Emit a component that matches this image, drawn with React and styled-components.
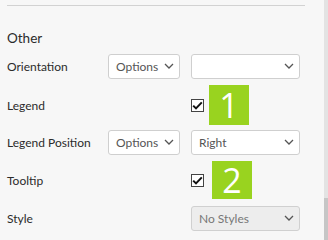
import React from 'react'
import styled, { createGlobalStyle } from 'styled-components'

const Global = createGlobalStyle`
  html, body { margin: 0; padding: 0; }
  body {
    width: 328px;
    height: 240px;
    overflow: hidden;
    background: #f7f7f7;
    font-family: Lato, "Open Sans", sans-serif;
    color: #2b2b2b;
  }
`

const Page = styled.div`
  display: flex;
  width: 328px;
  height: 240px;
`

const Panel = styled.div`
  flex: 1;
  padding: 5px 0 0 7px;
`

const Scroll = styled.div`
  width: 4px;
  background: #e3e3e3;
  display: flex;
  flex-direction: column;
  justify-content: flex-end;
  &::after {
    content: '';
    height: 42px;
    background: #c6c6c6;
  }
`

const Rule = styled.div`
  width: 298px;
  height: 1px;
  background: #d2d2d2;
`

const Heading = styled.div`
  font-size: 13.5px;
  height: 38px;
  line-height: 16px;
  padding-top: 24px;
  box-sizing: border-box;
  margin-bottom: 3px;
`

const Row = styled.div`
  display: grid;
  grid-template-columns: 90px 72px 109px;
  column-gap: 11px;
  align-items: center;
  height: 38px;
`

const Label = styled.div`
  font-size: 12px;
`

const Select = styled.div`
  grid-column: ${({ wide }) => (wide ? '3' : 'auto')};
  height: 25px;
  box-sizing: border-box;
  border: 1px solid ${({ disabled }) => (disabled ? '#d0d0d0' : '#cfcfcf')};
  border-radius: 3px;
  background: ${({ disabled }) => (disabled ? '#ededed' : '#fff')};
  display: flex;
  align-items: center;
  justify-content: space-between;
  padding: 0 5px 0 7px;
  font-size: 12px;
  color: ${({ disabled }) => (disabled ? '#777' : '#555')};
`

const Check = styled.div`
  grid-column: 3;
  display: flex;
  align-items: center;
`

const Box = styled.div`
  width: 13px;
  height: 13px;
  box-sizing: border-box;
  border: 1px solid #444;
  background: #fff;
  display: flex;
  align-items: center;
  justify-content: center;
`

const Badge = styled.div`
  width: 40px;
  height: ${({ h }) => h}px;
  margin-left: ${({ gap }) => gap}px;
  background: #99d31f;
  color: #fff;
  font-family: "Open Sans", sans-serif;
  font-size: 34px;
  line-height: ${({ h }) => h}px;
  text-align: center;
`

const Chevron = () => (
  <svg width="10" height="6" viewBox="0 0 10 6">
    <path d="M1 1l4 4 4-4" fill="none" stroke="#555" strokeWidth="1.3" />
  </svg>
)

const Tick = () => (
  <svg width="11" height="9" viewBox="0 0 11 9">
    <path d="M1.2 4.6l2.8 2.8L9.8 1.4" fill="none" stroke="#111" strokeWidth="2" />
  </svg>
)

const Checkbox = ({ n, gap, h }) => (
  <Check>
    <Box><Tick /></Box>
    <Badge gap={gap} h={h}>{n}</Badge>
  </Check>
)

const App = () => {
  return (
    <Page>
      <Global />
      <Panel>
        <Rule />
        <Heading>Other</Heading>
        <Row>
          <Label>Orientation</Label>
          <Select>Options<Chevron /></Select>
          <Select><span /><Chevron /></Select>
        </Row>
        <Row>
          <Label>Legend</Label>
          <Checkbox n="1" gap={5} h={40} />
        </Row>
        <Row>
          <Label>Legend Position</Label>
          <Select>Options<Chevron /></Select>
          <Select>Right<Chevron /></Select>
        </Row>
        <Row>
          <Label>Tooltip</Label>
          <Checkbox n="2" gap={8} h={38} />
        </Row>
        <Row>
          <Label>Style</Label>
          <Select wide disabled>No Styles<Chevron /></Select>
        </Row>
      </Panel>
      <Scroll />
    </Page>
  )
}

export default App
